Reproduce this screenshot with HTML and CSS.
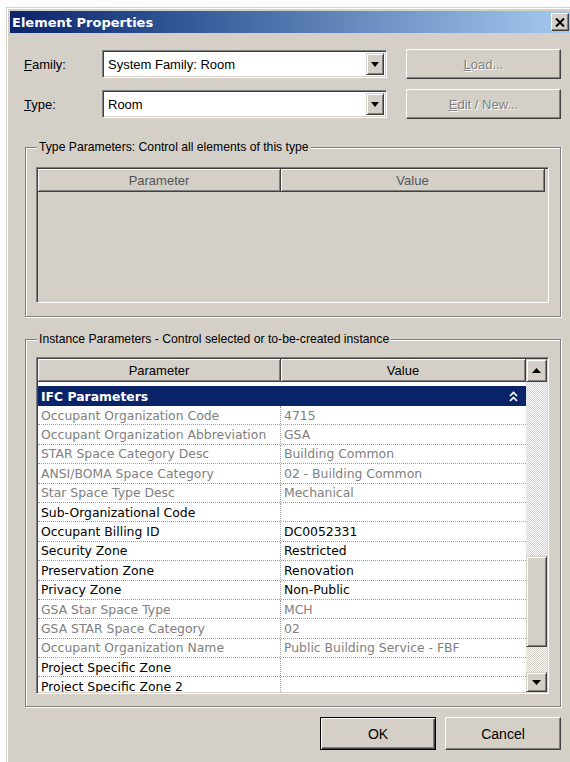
FILE: index.html
```html
<!DOCTYPE html>
<html lang="en">
<head>
<meta charset="utf-8">
<title>Element Properties</title>
<link rel="stylesheet" href="styles.css">
</head>
<body>
<div class="window">
  <div class="titlebar">
    <span class="title">Element Properties</span>
    <span class="close">
      <svg width="10" height="9" viewBox="0 0 10 9"><path d="M1 0.5 L9 8.5 M9 0.5 L1 8.5" stroke="#000" stroke-width="2"/></svg>
    </span>
  </div>

  <div class="content">
    <div class="selectors">
      <span class="lbl"><u>F</u>amily:</span>
      <div class="combo">
        <span class="combo-text">System Family: Room</span>
        <span class="drop"><svg width="8" height="5" viewBox="0 0 8 5"><path d="M0 0 H8 L4 5 Z" fill="#000"/></svg></span>
      </div>
      <span class="btn disabled"><u>L</u>oad...</span>

      <span class="lbl"><u>T</u>ype:</span>
      <div class="combo">
        <span class="combo-text">Room</span>
        <span class="drop"><svg width="8" height="5" viewBox="0 0 8 5"><path d="M0 0 H8 L4 5 Z" fill="#000"/></svg></span>
      </div>
      <span class="btn disabled"><u>E</u>dit / New...</span>
    </div>

    <div class="group group-type">
      <div class="group-title">Type Parameters: Control all elements of this type</div>
      <div class="grid grid-type">
        <div class="grid-head muted">
          <div class="hcell col-param">Parameter</div>
          <div class="hcell col-value">Value</div>
        </div>
      </div>
    </div>

    <div class="group group-inst">
      <div class="group-title">Instance Parameters - Control selected or to-be-created instance</div>
      <div class="grid grid-inst">
        <div class="list">
          <div class="grid-head">
            <div class="hcell col-param">Parameter</div>
            <div class="hcell col-value fill">Value</div>
          </div>
          <div class="list-body">
            <div class="section">
              <span>IFC Parameters</span>
              <svg width="9" height="11" viewBox="0 0 9 11"><path d="M1 5 L4.5 1.5 L8 5 M1 10 L4.5 6.5 L8 10" stroke="#fff" stroke-width="1.7" fill="none"/></svg>
            </div>
            <div class="row ro"><div class="cell col-param">Occupant Organization Code</div><div class="cell val">4715</div></div>
            <div class="row ro"><div class="cell col-param">Occupant Organization Abbreviation</div><div class="cell val">GSA</div></div>
            <div class="row ro"><div class="cell col-param">STAR Space Category Desc</div><div class="cell val">Building Common</div></div>
            <div class="row ro"><div class="cell col-param">ANSI/BOMA Space Category</div><div class="cell val">02 - Building Common</div></div>
            <div class="row ro"><div class="cell col-param">Star Space Type Desc</div><div class="cell val">Mechanical</div></div>
            <div class="row"><div class="cell col-param">Sub-Organizational Code</div><div class="cell val"></div></div>
            <div class="row"><div class="cell col-param">Occupant Billing ID</div><div class="cell val">DC0052331</div></div>
            <div class="row"><div class="cell col-param">Security Zone</div><div class="cell val">Restricted</div></div>
            <div class="row"><div class="cell col-param">Preservation Zone</div><div class="cell val">Renovation</div></div>
            <div class="row"><div class="cell col-param">Privacy Zone</div><div class="cell val">Non-Public</div></div>
            <div class="row ro"><div class="cell col-param">GSA Star Space Type</div><div class="cell val">MCH</div></div>
            <div class="row ro"><div class="cell col-param">GSA STAR Space Category</div><div class="cell val">02</div></div>
            <div class="row ro"><div class="cell col-param">Occupant Organization Name</div><div class="cell val">Public Building Service - FBF</div></div>
            <div class="row"><div class="cell col-param">Project Specific Zone</div><div class="cell val"></div></div>
            <div class="row"><div class="cell col-param">Project Specific Zone 2</div><div class="cell val"></div></div>
          </div>
        </div>
        <div class="scrollbar">
          <span class="sb-btn"><svg width="9" height="5" viewBox="0 0 9 5"><path d="M0 5 H9 L4.5 0 Z" fill="#000"/></svg></span>
          <span class="sb-track sb-track-top"></span>
          <span class="sb-thumb"></span>
          <span class="sb-track"></span>
          <span class="sb-btn sb-down"><svg width="9" height="5" viewBox="0 0 9 5"><path d="M0 0 H9 L4.5 5 Z" fill="#000"/></svg></span>
        </div>
      </div>
    </div>

    <div class="actions">
      <span class="btn action default">OK</span>
      <span class="btn action">Cancel</span>
    </div>
  </div>
</div>
</body>
</html>
```

FILE: styles.css
```css
html, body {
  margin: 0;
  padding: 0;
  background: #fff;
  overflow: hidden;
}

.window {
  margin: 7px 0 0 6px;
  width: 562px;
  height: 760px;
  padding: 3px 0 0 3px;
  border: 1px solid #d4d0c8;
  box-shadow: inset 1px 1px #fff;
  background: #d4d0c8;
  font-family: "Liberation Sans", Arial, sans-serif;
  color: #000;
}

/* caption bar */
.titlebar {
  height: 22px;
  display: flex;
  align-items: center;
  justify-content: space-between;
  padding: 0 3px 0 2px;
  background: linear-gradient(to right, #0a246a 0%, #3a5f9c 35%, #a6caf0 100%);
}

.title {
  font-family: "DejaVu Sans", Verdana, sans-serif;
  font-weight: bold;
  font-size: 13px;
  color: #fff;
}

.close {
  width: 18px;
  height: 18px;
  box-sizing: border-box;
  display: flex;
  align-items: center;
  justify-content: center;
  background: #d4d0c8;
  border: 1px solid;
  border-color: #fff #404040 #404040 #fff;
  box-shadow: inset -1px -1px #808080;
}

.content {
  padding: 0 11px 0 13px;
}

/* family / type pickers */
.selectors {
  display: grid;
  grid-template-columns: 79px 1fr 155px;
  grid-auto-rows: 30px;
  row-gap: 10px;
  align-items: center;
  padding-top: 16px;
  font-size: 13px;
}

.lbl {
  font-size: 13px;
  padding-left: 1px;
}

.combo {
  width: 285px;
  height: 28px;
  box-sizing: border-box;
  display: flex;
  align-items: stretch;
  background: #fff;
  border: 1px solid;
  border-color: #808080 #fff #fff #808080;
  box-shadow: inset 1px 1px #404040, inset -1px -1px #d4d0c8;
  padding: 2px;
}

.combo-text {
  flex: 1;
  display: flex;
  align-items: center;
  padding-left: 3px;
  font-size: 13px;
}

.drop {
  width: 18px;
  box-sizing: border-box;
  display: flex;
  align-items: center;
  justify-content: center;
  background: #d4d0c8;
  border: 1px solid;
  border-color: #d4d0c8 #404040 #404040 #d4d0c8;
  box-shadow: inset 1px 1px #fff, inset -1px -1px #808080;
}

.btn {
  box-sizing: border-box;
  display: flex;
  align-items: center;
  justify-content: center;
  background: #d4d0c8;
  border: 1px solid;
  border-color: #fff #404040 #404040 #fff;
  box-shadow: inset -1px -1px #808080;
  font-size: 13px;
}

.selectors .btn {
  height: 30px;
}

.btn.disabled {
  color: #808080;
  text-shadow: 1px 1px #fff;
}

/* etched group boxes */
.group {
  display: flex;
  flex-direction: column;
  margin-left: 2px;
  width: 536px;
  box-sizing: border-box;
  border: 1px solid #808080;
  box-shadow: inset 1px 1px #fff, 1px 1px #fff;
}

.group-type {
  margin-top: 28px;
}

.group-inst {
  margin-top: 22px;
}

.group-title {
  align-self: flex-start;
  margin: -8px 0 0 11px;
  padding: 0 2px;
  background: #d4d0c8;
  font-size: 12.2px;
  line-height: 15px;
}

/* sunken property grid */
.grid {
  box-sizing: border-box;
  width: 513px;
  margin-left: 10px;
  border: 1px solid;
  border-color: #808080 #fff #fff #808080;
  box-shadow: inset 1px 1px #404040, inset -1px -1px #d4d0c8;
  padding: 1px;
  display: flex;
}

.grid-type {
  margin-top: 12px;
  margin-bottom: 13px;
  height: 136px;
  flex-direction: column;
}

.grid-inst {
  margin-top: 10px;
  margin-bottom: 12px;
  height: 337px;
}

.grid-head {
  display: flex;
  height: 23px;
  flex: none;
  font-size: 13px;
}

.grid-head.muted {
  color: #555;
}

.hcell {
  box-sizing: border-box;
  display: flex;
  align-items: center;
  justify-content: center;
  background: #d4d0c8;
  border-right: 1px solid #404040;
  border-bottom: 1px solid #404040;
  box-shadow: inset 1px 1px #fff, inset -1px -1px #808080;
}

.col-param {
  width: 243px;
  flex: none;
}

.col-value {
  width: 264px;
}

.hcell.fill {
  flex: 1;
  width: auto;
}

.list {
  flex: 1;
  display: flex;
  flex-direction: column;
  min-width: 0;
}

.list-body {
  flex: 1;
  background: #fff;
  padding-top: 4px;
  overflow: hidden;
  font-family: "DejaVu Sans", Verdana, sans-serif;
  font-size: 12.4px;
}

.section {
  height: 20px;
  display: flex;
  align-items: center;
  justify-content: space-between;
  padding: 0 8px 0 3px;
  background: #0a246a;
  color: #fff;
  font-weight: bold;
}

.row {
  height: 19.4px;
  box-sizing: border-box;
  display: flex;
  border-bottom: 1px dotted #a0a0a0;
  color: #000;
}

.row.ro {
  color: #808080;
}

.cell {
  display: flex;
  align-items: center;
  white-space: nowrap;
  overflow: hidden;
}

.cell.col-param {
  box-sizing: border-box;
  padding-left: 3px;
  border-right: 1px dotted #a0a0a0;
}

.cell.val {
  flex: 1;
  padding-left: 3px;
}

/* vertical scrollbar */
.scrollbar {
  width: 21px;
  flex: none;
  display: flex;
  flex-direction: column;
}

.sb-btn {
  height: 23px;
  box-sizing: border-box;
  display: flex;
  align-items: center;
  justify-content: center;
  background: #d4d0c8;
  border: 1px solid;
  border-color: #d4d0c8 #404040 #404040 #d4d0c8;
  box-shadow: inset 1px 1px #fff, inset -1px -1px #808080;
}

.sb-down {
  height: 20px;
}

.sb-track {
  flex: 1;
  background: repeating-conic-gradient(#d4d0c8 0 25%, #fff 0 50%) 0 0 / 2px 2px;
}

.sb-track-top {
  flex: none;
  height: 174px;
}

.sb-thumb {
  height: 91px;
  box-sizing: border-box;
  background: #d4d0c8;
  border: 1px solid;
  border-color: #d4d0c8 #404040 #404040 #d4d0c8;
  box-shadow: inset 1px 1px #fff, inset -1px -1px #808080;
}

/* dialog buttons */
.actions {
  display: flex;
  justify-content: flex-end;
  gap: 9px;
  margin-top: 10px;
}

.btn.action {
  width: 116px;
  height: 33px;
  font-size: 14px;
}

.btn.default {
  border: 1px solid #000;
  box-shadow: inset 1px 1px #fff, inset -1px -1px #404040, inset -2px -2px #808080;
}
```
